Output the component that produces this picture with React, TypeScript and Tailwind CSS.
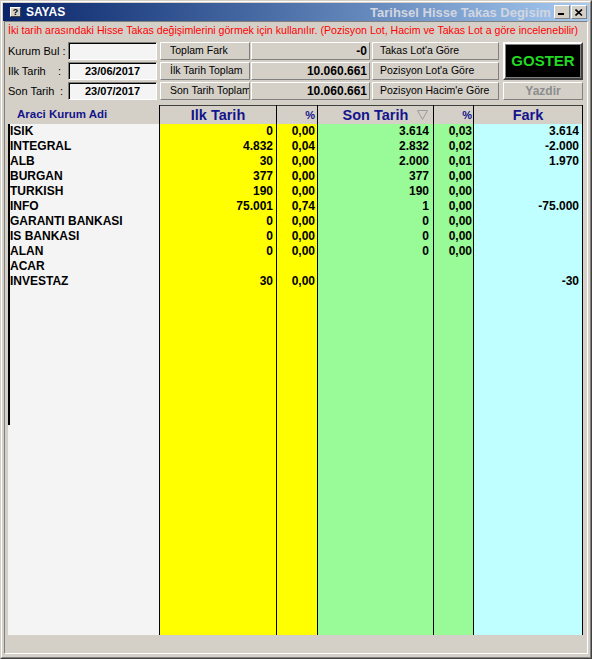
import React from "react";

type Row = { name: string; ilk: string; ilkP: string; son: string; sonP: string; fark: string };

const rows: Row[] = [
  { name: "ISIK", ilk: "0", ilkP: "0,00", son: "3.614", sonP: "0,03", fark: "3.614" },
  { name: "INTEGRAL", ilk: "4.832", ilkP: "0,04", son: "2.832", sonP: "0,02", fark: "-2.000" },
  { name: "ALB", ilk: "30", ilkP: "0,00", son: "2.000", sonP: "0,01", fark: "1.970" },
  { name: "BURGAN", ilk: "377", ilkP: "0,00", son: "377", sonP: "0,00", fark: "" },
  { name: "TURKISH", ilk: "190", ilkP: "0,00", son: "190", sonP: "0,00", fark: "" },
  { name: "INFO", ilk: "75.001", ilkP: "0,74", son: "1", sonP: "0,00", fark: "-75.000" },
  { name: "GARANTI BANKASI", ilk: "0", ilkP: "0,00", son: "0", sonP: "0,00", fark: "" },
  { name: "IS BANKASI", ilk: "0", ilkP: "0,00", son: "0", sonP: "0,00", fark: "" },
  { name: "ALAN", ilk: "0", ilkP: "0,00", son: "0", sonP: "0,00", fark: "" },
  { name: "ACAR", ilk: "", ilkP: "", son: "", sonP: "", fark: "" },
  { name: "INVESTAZ", ilk: "30", ilkP: "0,00", son: "", sonP: "", fark: "-30" },
];

const raised =
  "bg-[#d4d0c8] border border-t-white border-l-white border-r-[#808080] border-b-[#808080]";
const sunken =
  "bg-[#f4f4f4] border border-t-[#808080] border-l-[#808080] border-r-white border-b-white shadow-[inset_1px_1px_0_#000]";

function NumCol({
  width,
  bg,
  header,
  values,
  pr,
  small,
}: {
  width: string;
  bg: string;
  header: React.ReactNode;
  values: string[];
  pr: string;
  small?: boolean;
}) {
  return (
    <div className={`${width} flex flex-col border-r border-black`}>
      <div
        className={`h-[19px] bg-[#d4d0c8] border-t border-[#404040] flex items-center ${
          small ? `justify-end ${pr} text-[11px]` : "justify-center text-[14.5px]"
        } font-bold text-[#14148c] leading-none`}
      >
        {header}
      </div>
      <div className={`flex-1 ${bg}`}>
        {values.map((v, i) => (
          <div key={i} className={`h-[15px] leading-[15px] text-right ${pr} text-[12px] font-bold text-black`}>
            {v}
          </div>
        ))}
      </div>
    </div>
  );
}

export default function App() {
  return (
    <div className="w-[592px] h-[659px] bg-[#d4d0c8] border border-t-[#d4d0c8] border-l-[#d4d0c8] border-r-[#404040] border-b-[#404040] font-['Liberation_Sans',Arial,sans-serif] overflow-hidden">
      <div className="h-full border border-t-white border-l-white border-r-[#808080] border-b-[#808080] p-[1px] flex flex-col">
        {/* Title bar */}
        <div className="h-[18px] bg-gradient-to-r from-[#0a246a] to-[#a6caf0] flex items-center relative shrink-0">
          <div className="ml-[7px] w-[11px] h-[10px] bg-[#d4d0c8] border border-t-white border-l-white border-r-[#404040] border-b-[#404040] flex items-center justify-center text-[9px] font-bold text-black leading-none">
            ?
          </div>
          <span className="ml-[5px] text-white font-bold text-[12px] leading-none">SAYAS</span>
          <div className="absolute left-[367px] right-[35px] top-0 h-full overflow-hidden flex items-center">
            <span className="whitespace-nowrap text-[#d2d6e0] font-bold text-[13px] leading-none">
              Tarihsel Hisse Takas Degisim
            </span>
          </div>
          <div className="ml-auto mr-[2px] flex">
            <div className={`w-[16px] h-[14px] ${raised} flex items-end justify-center pb-[2px]`}>
              <svg width="8" height="3" viewBox="0 0 8 3">
                <rect x="0" y="0" width="6" height="2" fill="#000" />
              </svg>
            </div>
            <div className={`w-[16px] h-[14px] ml-[1px] ${raised} flex items-center justify-center`}>
              <svg width="8" height="7" viewBox="0 0 8 7">
                <path d="M0.5 0.5 L7 6.5 M7 0.5 L0.5 6.5" stroke="#000" strokeWidth="1.6" />
              </svg>
            </div>
          </div>
        </div>

        {/* Main panel */}
        <div className="flex-1 mx-[1px] mb-[2px] border border-t-[#808080] border-l-[#808080] border-r-white border-b-white flex flex-col">
          <div className="h-[17px] pl-[3px] flex items-center text-[10.6px] text-[#ff0000] whitespace-nowrap">
            İki tarih arasındaki Hisse Takas değişimlerini görmek için kullanılır. (Pozisyon Lot, Hacim ve Takas Lot a göre incelenebilir)
          </div>

          {/* Controls */}
          <div className="mt-[3px] pl-[3px] flex">
            <div className="w-[60px] flex flex-col gap-[2px] text-[11px] text-black">
              <div className="h-[18px] flex items-center">Kurum Bul :</div>
              <div className="h-[18px] flex items-center pr-[7px]">
                <span>Ilk Tarih</span>
                <span className="ml-auto">:</span>
              </div>
              <div className="h-[18px] flex items-center pr-[5px]">
                <span>Son Tarih</span>
                <span className="ml-auto">:</span>
              </div>
            </div>
            <div className="w-[89px] flex flex-col gap-[2px]">
              <div className={`h-[18px] ${sunken}`} />
              <div className={`h-[18px] ${sunken} flex items-center justify-center text-[11px] font-bold`}>23/06/2017</div>
              <div className={`h-[18px] ${sunken} flex items-center justify-center text-[11px] font-bold`}>23/07/2017</div>
            </div>
            <div className="w-[90px] ml-[3px] flex flex-col gap-[2px] text-[10.5px] text-black">
              <div className={`h-[18px] ${raised} flex items-center pl-[9px] whitespace-nowrap overflow-hidden`}>Toplam Fark</div>
              <div className={`h-[18px] ${raised} flex items-center pl-[9px] whitespace-nowrap overflow-hidden`}>İlk Tarih Toplam</div>
              <div className={`h-[18px] ${raised} flex items-center pl-[9px] whitespace-nowrap overflow-hidden`}>Son Tarih Toplam</div>
            </div>
            <div className="w-[119px] ml-[1px] flex flex-col gap-[2px] text-[12px] font-bold text-black">
              <div className={`h-[18px] ${raised} flex items-center justify-end pr-[2px]`}>-0</div>
              <div className={`h-[18px] ${raised} flex items-center justify-end pr-[2px]`}>10.060.661</div>
              <div className={`h-[18px] ${raised} flex items-center justify-end pr-[2px]`}>10.060.661</div>
            </div>
            <div className="w-[127px] ml-[2px] flex flex-col gap-[2px] text-[10.5px] text-black">
              <div className={`h-[18px] ${raised} flex items-center pl-[7px] whitespace-nowrap`}>Takas Lot'a Göre</div>
              <div className={`h-[18px] ${raised} flex items-center pl-[7px] whitespace-nowrap`}>Pozisyon Lot'a Göre</div>
              <div className={`h-[18px] ${raised} flex items-center pl-[7px] whitespace-nowrap`}>Pozisyon Hacim'e Göre</div>
            </div>
            <div className="w-[80px] ml-[4px] flex flex-col gap-[2px]">
              <div className="h-[38px] border-2 border-t-white border-l-white border-r-[#404040] border-b-[#404040] bg-[#d4d0c8]">
                <div className="h-full bg-black border border-[#808080] flex items-center justify-center text-[15px] font-bold text-[#22d822]">
                  GOSTER
                </div>
              </div>
              <div className={`h-[18px] ${raised} flex items-center justify-center text-[12px] font-bold text-[#8c8c8c]`}>Yazdir</div>
            </div>
          </div>

          {/* Grid */}
          <div className="mt-[5px] ml-[3px] h-[530px] flex">
            <div className="w-[152px] flex flex-col border-r border-black">
              <div className="h-[19px] bg-[#d4d0c8] flex items-center pl-[9px] text-[11.5px] font-bold text-[#14148c]">
                Araci Kurum Adi
              </div>
              <div className="flex-1 bg-[#f4f4f4]">
                <div className="h-[301px] border-l-2 border-black">
                  {rows.map((r) => (
                    <div key={r.name} className="h-[15px] leading-[15px] text-[12px] font-bold text-black whitespace-nowrap">
                      {r.name}
                    </div>
                  ))}
                </div>
              </div>
            </div>
            <NumCol width="w-[117px]" bg="bg-[#ffff00]" header="Ilk Tarih" values={rows.map((r) => r.ilk)} pr="pr-[3px]" />
            <NumCol width="w-[41px]" bg="bg-[#ffff00]" header="%" values={rows.map((r) => r.ilkP)} pr="pr-[2px]" small />
            <NumCol
              width="w-[116px]"
              bg="bg-[#98fb98]"
              header={
                <span className="flex items-center ml-[20px]">
                  <span>Son Tarih</span>
                  <svg className="ml-[9px]" width="11" height="10" viewBox="0 0 11 10">
                    <path d="M0.5 0.5 H10.5 L5.5 9.5 Z" fill="none" stroke="#9a9a9a" strokeWidth="1" />
                  </svg>
                </span>
              }
              values={rows.map((r) => r.son)}
              pr="pr-[4px]"
            />
            <NumCol width="w-[40px]" bg="bg-[#98fb98]" header="%" values={rows.map((r) => r.sonP)} pr="pr-[1px]" small />
            <NumCol width="w-[109px]" bg="bg-[#c0ffff]" header="Fark" values={rows.map((r) => r.fark)} pr="pr-[3px]" />
          </div>
        </div>
      </div>
    </div>
  );
}
